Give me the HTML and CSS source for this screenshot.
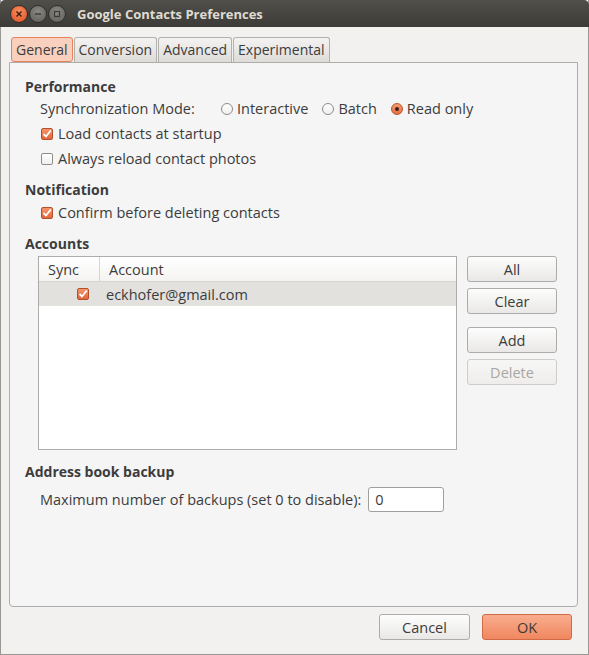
FILE: index.html
```html
<!DOCTYPE html>
<html lang="en">
<head>
  <meta charset="UTF-8">
  <title>Google Contacts Preferences</title>
  <link rel="stylesheet" href="styles.css">
</head>
<body>

<div class="window">
  <div class="titlebar">
    <div class="wm-buttons">
      <span class="wm close">
        <svg width="8" height="8" viewBox="0 0 8 8"><path d="M1.5 1.5 L6.5 6.5 M6.5 1.5 L1.5 6.5" stroke="#3a1a0e" stroke-width="1.4"/></svg>
      </span>
      <span class="wm">
        <svg width="8" height="8" viewBox="0 0 8 8"><path d="M1 4 H7" stroke="#3b3a36" stroke-width="1.4"/></svg>
      </span>
      <span class="wm">
        <svg width="8" height="8" viewBox="0 0 8 8"><rect x="1.5" y="1.5" width="5" height="5" fill="none" stroke="#3b3a36" stroke-width="1.2"/></svg>
      </span>
    </div>
    <div class="title">Google Contacts Preferences</div>
  </div>

  <div class="content">
    <div class="tabs">
      <div class="tab active">General</div>
      <div class="tab">Conversion</div>
      <div class="tab">Advanced</div>
      <div class="tab">Experimental</div>
    </div>

    <div class="panel">
      <div class="heading first">Performance</div>
      <div class="row indent">
        <span class="label">Synchronization Mode:</span>
        <span class="option"><span class="radio"></span>Interactive</span>
        <span class="option"><span class="radio"></span>Batch</span>
        <span class="option"><span class="radio on"></span>Read only</span>
      </div>
      <div class="row indent">
        <span class="box on"><svg width="10" height="10" viewBox="0 0 10 10"><path d="M1.5 5 L4 7.5 L8.8 1.5" fill="none" stroke="#fff" stroke-width="1.8"/></svg></span>
        Load contacts at startup
      </div>
      <div class="row indent">
        <span class="box"></span>
        Always reload contact photos
      </div>

      <div class="heading gap">Notification</div>
      <div class="row indent">
        <span class="box on"><svg width="10" height="10" viewBox="0 0 10 10"><path d="M1.5 5 L4 7.5 L8.8 1.5" fill="none" stroke="#fff" stroke-width="1.8"/></svg></span>
        Confirm before deleting contacts
      </div>

      <div class="heading gap">Accounts</div>
      <div class="accounts">
        <div class="tree">
          <div class="tree-head">
            <div class="col-sync">Sync</div>
            <div class="col-account">Account</div>
          </div>
          <div class="tree-row selected">
            <div class="col-sync">
              <span class="box on"><svg width="10" height="10" viewBox="0 0 10 10"><path d="M1.5 5 L4 7.5 L8.8 1.5" fill="none" stroke="#fff" stroke-width="1.8"/></svg></span>
            </div>
            <div class="col-account">eckhofer@gmail.com</div>
          </div>
        </div>
        <div class="side-buttons">
          <button class="btn">All</button>
          <button class="btn">Clear</button>
          <button class="btn spaced">Add</button>
          <button class="btn" disabled>Delete</button>
        </div>
      </div>

      <div class="heading backup">Address book backup</div>
      <div class="row indent backup-row">
        <span>Maximum number of backups (set 0 to disable):</span>
        <span class="entry">0</span>
      </div>
    </div>

    <div class="actions">
      <button class="btn dialog">Cancel</button>
      <button class="btn dialog primary">OK</button>
    </div>
  </div>
</div>

</body>
</html>
```

FILE: styles.css
```css
* {
  box-sizing: border-box;
}

body {
  margin: 0;
  font-family: 'Open Sans', 'DejaVu Sans', sans-serif;
  font-size: 14.5px;
  color: #3c3c3c;
  background: #f2f1f0;
}

.window {
  width: 589px;
  height: 655px;
  display: flex;
  flex-direction: column;
  border: 1px solid #9a9894;
  border-top: none;
  background: #f2f1f0;
}

/* title bar */
.titlebar {
  height: 27px;
  margin: 0 -1px;
  display: flex;
  align-items: center;
  background: linear-gradient(#504f4a, #3c3b37);
  border-radius: 5px 5px 0 0;
}

.wm-buttons {
  display: flex;
  gap: 1px;
  padding-left: 10px;
  width: 77px;
}

.wm {
  width: 18px;
  height: 18px;
  border-radius: 50%;
  display: flex;
  align-items: center;
  justify-content: center;
  background: radial-gradient(circle at 50% 35%, #8a8883, #5f5d58);
  border: 1px solid #2f2e2a;
}

.wm.close {
  background: radial-gradient(circle at 50% 35%, #f88d60, #df4f1f);
}

.title {
  color: #dfdbd2;
  font-weight: bold;
  font-size: 13px;
}

/* main area */
.content {
  flex: 1;
  display: flex;
  flex-direction: column;
  padding: 9px 10px 14px 8px;
}

.tabs {
  display: flex;
  padding-left: 2px;
  gap: 1px;
  height: 26px;
  align-items: flex-end;
  font-size: 14px;
}

.tab {
  height: 25px;
  padding: 0 4px;
  line-height: 23px;
  border: 1px solid #b3b1ad;
  border-bottom: none;
  border-radius: 3px 3px 0 0;
  background: linear-gradient(#f4f3f2, #dedcd9);
  color: #3c3c3c;
}

.tab.active {
  height: 25px;
  line-height: 23px;
  border: 1px solid #e8825a;
  border-radius: 3px;
  background: #f8d0bd;
  padding: 0 4px;
}

.panel {
  flex: 1;
  background: #f5f5f5;
  border: 1px solid #aeaca8;
  border-radius: 0 0 4px 4px;
  padding: 14px 15px 0 15px;
}

.heading {
  font-weight: bold;
  font-size: 14px;
  height: 20px;
  line-height: 20px;
}

.heading.first {
  height: 19px;
  line-height: 19px;
}

.heading.gap {
  margin-top: 9px;
}

.row {
  height: 25px;
  display: flex;
  align-items: center;
}

.indent {
  padding-left: 15px;
}

.label {
  width: 181px;
}

.option {
  display: flex;
  align-items: center;
  margin-right: 14px;
}

.radio {
  width: 12px;
  height: 12px;
  border-radius: 50%;
  border: 1px solid #8e8c88;
  background: linear-gradient(#ffffff, #efefef);
  margin-right: 4px;
  position: relative;
}

.radio.on {
  border-color: #b9552f;
  background: linear-gradient(#f59a72, #e66f41);
}

.radio.on::after {
  content: '';
  position: absolute;
  left: 3px;
  top: 3px;
  width: 4px;
  height: 4px;
  border-radius: 50%;
  background: #3c2017;
}

.box {
  width: 12px;
  height: 12px;
  border: 1px solid #8e8c88;
  border-radius: 2px;
  background: linear-gradient(#ffffff, #efefef);
  margin: 0 5px 0 1px;
  display: inline-flex;
  align-items: center;
  justify-content: center;
}

.box.on {
  border-color: #b44f2a;
  background: linear-gradient(#f5956c, #e2663a);
}

/* accounts */
.accounts {
  display: flex;
  gap: 10px;
  margin-top: 2px;
  padding-left: 13px;
}

.tree {
  width: 419px;
  height: 194px;
  background: #fff;
  border: 1px solid #aeaca8;
}

.tree-head {
  display: flex;
  height: 25px;
  border-bottom: 1px solid #d6d4d0;
  background: linear-gradient(#ffffff, #f4f3f2);
}

.tree-head .col-sync {
  border-right: 1px solid #d6d4d0;
}

.col-sync {
  width: 61px;
  padding-left: 9px;
  display: flex;
  align-items: center;
}

.col-account {
  padding-left: 9px;
  display: flex;
  align-items: center;
}

.tree-row {
  display: flex;
  height: 24px;
}

.tree-row.selected {
  background: #e3e1de;
}

.tree-row .col-sync {
  justify-content: flex-end;
  padding-right: 6px;
}

.tree-row .col-account {
  padding-left: 6px;
}

.side-buttons {
  display: flex;
  flex-direction: column;
  width: 90px;
}

.btn {
  font-family: inherit;
  font-size: 14.5px;
  color: #3c3c3c;
  height: 26px;
  margin-bottom: 6px;
  border: 1px solid #aeaca8;
  border-radius: 3px;
  background: linear-gradient(#fdfdfd, #e9e8e6);
  padding: 0;
}

.btn.spaced {
  margin-top: 7px;
}

.btn:disabled {
  color: #a9a7a3;
  border-color: #cfcdc9;
  background: linear-gradient(#f7f7f6, #eeedec);
}

/* backup */
.heading.backup {
  margin-top: 12px;
}

.backup-row {
  height: 31px;
  margin-top: 2px;
}

.entry {
  margin-left: 7px;
  width: 76px;
  height: 25px;
  border: 1px solid #a19f9b;
  border-radius: 3px;
  background: #fff;
  padding-left: 6px;
  line-height: 23px;
}

/* dialog actions */
.actions {
  display: flex;
  justify-content: flex-end;
  gap: 12px;
  padding: 7px 6px 0 0;
}

.btn.dialog {
  width: 91px;
  margin: 0;
}

.btn.primary {
  width: 90px;
  border-color: #d06a46;
  background: linear-gradient(#f9ad8e, #f0875f);
}
```
